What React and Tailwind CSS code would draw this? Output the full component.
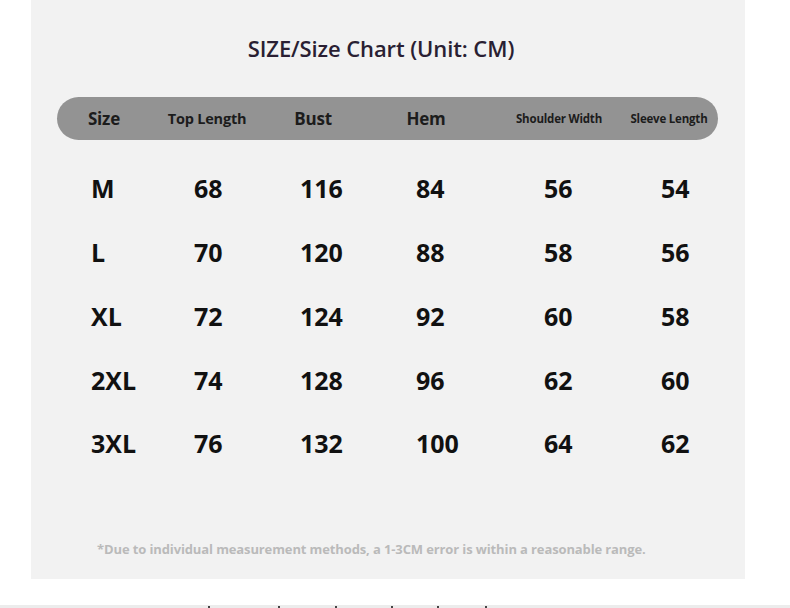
import React from "react";

const headers = [
  { label: "Size", w: "w-[94px]", size: "text-[17px] font-bold" },
  { label: "Top Length", w: "w-[112px]", size: "text-[14.5px] font-bold" },
  { label: "Bust", w: "w-[100px]", size: "text-[17px] font-bold" },
  { label: "Hem", w: "w-[126px]", size: "text-[17px] font-bold" },
  { label: "Shoulder Width", w: "w-[140px]", size: "text-[11.5px] font-bold" },
  { label: "Sleeve Length", w: "w-[80px]", size: "text-[11.5px] font-bold" },
];

const rows = [
  ["M", 68, 116, 84, 56, 54],
  ["L", 70, 120, 88, 58, 56],
  ["XL", 72, 124, 92, 60, 58],
  ["2XL", 74, 128, 96, 62, 60],
  ["3XL", 76, 132, 100, 64, 62],
];

// left edges of the value columns, as widths from one to the next
const cellWidths = ["w-[103px]", "w-[106px]", "w-[116px]", "w-[128px]", "w-[117px]", "w-[60px]"];

const ticks = ["ml-[208px]", "ml-[68px]", "ml-[55px]", "ml-[54px]", "ml-[44px]", "ml-[46px]"];

const SizeChart = () => {
  return (
    <div className="h-[608px] w-[790px] overflow-hidden bg-white font-['Open_Sans',sans-serif]">
      <section className="ml-[31px] flex h-[579px] w-[714px] flex-col bg-[#f2f2f2] pt-[33px]">
        <h1 className="pr-[14px] text-center text-[22px] font-semibold leading-[30px] tracking-[-0.1px] text-[#2a1f33]">
          SIZE/Size Chart (Unit: CM)
        </h1>

        <div className="ml-[26px] mt-[34px] flex h-[43px] w-[661px] items-center rounded-full bg-[#939393] text-[#1c1c1c]">
          {headers.map((h) => (
            <div key={h.label} className={`${h.w} shrink-0 text-center ${h.size} tracking-[-0.2px]`}>
              {h.label}
            </div>
          ))}
        </div>

        <div className="mt-[17px] flex flex-col pl-[60px]">
          {rows.map((row) => (
            <div key={row[0]} className="flex h-[63.75px] items-center text-[25px] font-bold text-[#111]">
              {row.map((v, i) => (
                <div key={i} className={`${cellWidths[i]} shrink-0 leading-none`}>
                  {v}
                </div>
              ))}
            </div>
          ))}
        </div>

        <p className="ml-[66px] mt-auto mb-[20px] text-[13px] font-bold tracking-[-0.12px] text-[#bababa]">
          *Due to individual measurement methods, a 1-3CM error is within a reasonable range.
        </p>
      </section>

      <div className="mt-[26px] flex h-[3px] w-full bg-[#ececec]">
        {ticks.map((t, i) => (
          <span key={i} className={`${t} mt-[1px] h-[2px] w-[2px] bg-[#444]`} />
        ))}
      </div>
    </div>
  );
};

export default SizeChart;
